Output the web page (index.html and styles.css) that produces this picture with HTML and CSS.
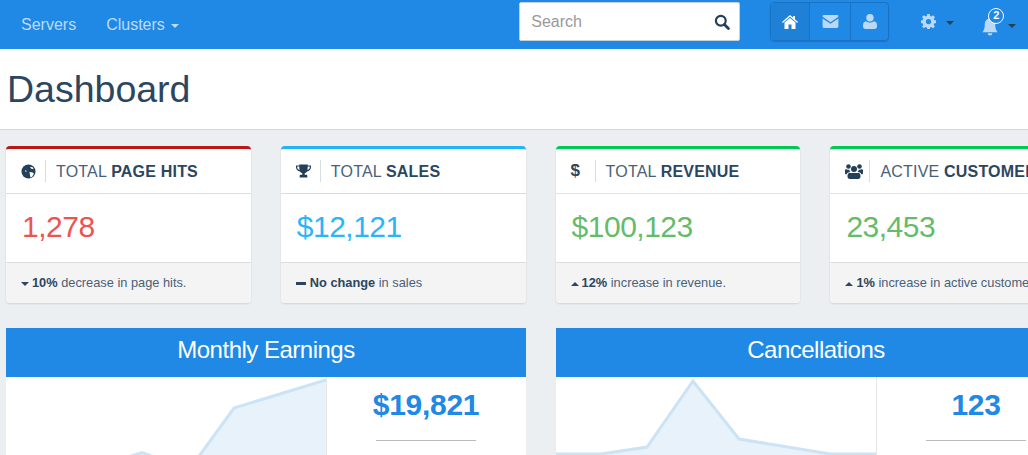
FILE: index.html
```html
<!DOCTYPE html>
<html lang="en">
<head>
<meta charset="utf-8">
<title>Dashboard</title>
<link rel="stylesheet" href="styles.css">
</head>
<body>
<nav class="navbar">
  <a class="nav-link servers" href="#">Servers</a>
  <a class="nav-link clusters" href="#">Clusters <span class="caret light"></span></a>
  <form class="search">
    <input class="search-input" type="text" placeholder="Search">
    <svg class="search-icon" viewBox="0 0 16 16"><circle cx="6.8" cy="6.8" r="4.9" fill="none" stroke="#243f58" stroke-width="2.2"/><path d="M10.4 10.4l4 4" stroke="#243f58" stroke-width="2.8" stroke-linecap="round"/></svg>
  </form>
  <div class="btn-group">
    <a class="btn active" href="#"><svg class="ico-home" viewBox="0 0 16 14"><path fill="#fff" d="M8 0l3 2.6V1h2v3.3L16 7l-.8.9L8 1.8.8 7.9 0 7z"/><path fill="#fff" d="M8 3l5.500 4.600V14H9.500V9.500h-3V14H2.500V7.600z"/></svg></a>
    <a class="btn" href="#"><svg class="ico-mail" viewBox="0 0 17 14"><path fill="#b9d9f6" d="M1.500 0h14A1.500 1.500 0 0 1 17 1.500V2L8.500 7.800 0 2v-.5A1.500 1.500 0 0 1 1.500 0z"/><path fill="#b9d9f6" d="M0 3.700l8.500 5.800L17 3.700v8.800a1.500 1.500 0 0 1-1.500 1.500h-14A1.500 1.500 0 0 1 0 12.500z"/></svg></a>
    <a class="btn" href="#"><svg class="ico-user" viewBox="0 0 14 15"><circle cx="7" cy="3.700" r="3.700" fill="#b9d9f6"/><path fill="#b9d9f6" d="M3 7.200c1 .9 2.500 1.400 4 1.400s3-.5 4-1.400c2 .3 3 1.800 3 4.300v1c0 1.500-1 2.500-2.500 2.500h-9C1 15 0 14 0 12.500v-1c0-2.500 1-4 3-4.300z"/></svg></a>
  </div>
  <a class="tool gear" href="#"><svg class="ico-gear" viewBox="0 0 16 16"><path fill="#b9d9f6" fill-rule="evenodd" d="M6.600 0h2.800l.4 2.200 1.300.5 1.800-1.300 2 2-1.300 1.800.5 1.300 1.900.4v2.800l-2 .4-.5 1.300 1.300 1.800-2 2-1.800-1.300-1.300.5-.4 2.200H6.600l-.4-2.200-1.300-.5-1.800 1.300-2-2 1.300-1.800-.5-1.300L0 9.600V6.800l1.900-.4.500-1.300L1.100 3.300l2-2 1.800 1.300 1.300-.5zM8 5.300a2.800 2.800 0 1 0 0 5.600 2.800 2.800 0 0 0 0-5.600z"/></svg><span class="caret dark"></span></a>
  <a class="tool bell" href="#"><svg class="ico-bell" viewBox="0 0 16 20"><path fill="#b9d9f6" d="M8 0a2 2 0 0 1 2 2c2.500.7 3.500 3 3.500 6 0 4 1 6 2.500 8H0c1.500-2 2.500-4 2.500-8 0-3 1-5.300 3.500-6a2 2 0 0 1 2-2z"/><path fill="#b9d9f6" d="M5.500 17h5a2.500 2.500 0 0 1-5 0z"/></svg><span class="badge">2</span><span class="caret dark"></span></a>
</nav>

<header class="page-header"><h1 class="page-title">Dashboard</h1></header>

<main class="content">
  <section class="stat-row">
    <article class="card card-red">
      <div class="card-head"><span class="card-icon"><svg class="ico-globe" viewBox="0 0 16 16"><circle cx="8" cy="8" r="7.500" fill="#243f58"/><path fill="#fff" d="M9.500 3l3 .5 1 2-2.500-.5zM9 8.500l3.500.5 1.300 1.500-2 3-1.700.8-.6-3zM4 7.500l1.500 1 .5-1-1-.8z"/></svg></span><h2 class="card-title">TOTAL <b>PAGE HITS</b></h2></div>
      <div class="card-value">1,278</div>
      <div class="card-foot"><span class="tri down"></span><b>10%</b> decrease in page hits.</div>
    </article>
    <article class="card card-blue">
      <div class="card-head"><span class="card-icon"><svg class="ico-trophy" viewBox="0 0 16 14"><path fill="#243f58" d="M3.500 0h9v1H16v2c0 2.500-1.800 4-4.200 4.400C11 8.500 10 9.200 9.300 9.500V11h1.500c.8 0 1.300.5 1.300 1.200V14H3.900v-1.800c0-.7.500-1.200 1.300-1.200h1.500V9.500C6 9.200 5 8.500 4.200 7.400 1.800 7 0 5.500 0 3V1h3.500zM1.300 2.300V3c0 1.500.9 2.500 2.600 3-.3-1-.4-2.300-.4-3.700zm13.400 0h-2.200c0 1.400-.1 2.700-.4 3.700 1.700-.5 2.600-1.500 2.600-3z"/></svg></span><h2 class="card-title">TOTAL <b>SALES</b></h2></div>
      <div class="card-value">$12,121</div>
      <div class="card-foot"><span class="dash"></span><b>No change</b> in sales</div>
    </article>
    <article class="card card-green">
      <div class="card-head"><span class="card-icon glyph">$</span><h2 class="card-title">TOTAL <b>REVENUE</b></h2></div>
      <div class="card-value">$100,123</div>
      <div class="card-foot"><span class="tri up"></span><b>12%</b> increase in revenue.</div>
    </article>
    <article class="card card-green">
      <div class="card-head"><span class="card-icon"><svg class="ico-users" viewBox="0 0 18 15"><g fill="#243f58"><circle cx="9" cy="5" r="3"/><circle cx="3.500" cy="2.500" r="2.300"/><circle cx="14.500" cy="2.500" r="2.300"/><path d="M4.500 9h9c1.500 0 2 1.500 2 3.200 0 1.700-.8 2.800-2.300 2.800H4.800c-1.500 0-2.300-1.100-2.300-2.800C2.500 10.500 3 9 4.500 9z"/><path d="M0 6.500C0 5.500.8 5 1.500 5.300c1 .5 2 .6 2.800.4.100 1 .5 1.800 1.100 2.300-1.900 0-3.100.8-3.800 2.300H1c-.7 0-1-.5-1-1.300zM18 6.500c0-1-.8-1.500-1.500-1.200-1 .5-2 .6-2.800.4-.1 1-.5 1.800-1.100 2.300 1.900 0 3.100.8 3.800 2.300h.6c.7 0 1-.5 1-1.300z"/></g></svg></span><h2 class="card-title">ACTIVE <b>CUSTOMERS</b></h2></div>
      <div class="card-value">23,453</div>
      <div class="card-foot"><span class="tri up"></span><b>1%</b> increase in active customers.</div>
    </article>
  </section>

  <section class="panel-row">
    <article class="panel">
      <h2 class="panel-title">Monthly Earnings</h2>
      <div class="panel-body">
        <div class="chart"><svg class="chart-svg" viewBox="0 0 320 100"><path class="area" d="M0 100H91V90L136 75.500L183 93L228 31L320 3V100Z"/><path class="line" d="M91 90L136 75.500L183 93L228 31L320 3"/></svg></div>
        <div class="figures"><div class="figure">$19,821</div><div class="rule"></div></div>
      </div>
    </article>
    <article class="panel">
      <h2 class="panel-title">Cancellations</h2>
      <div class="panel-body">
        <div class="chart"><svg class="chart-svg" viewBox="0 0 320 100"><path class="area" d="M0 100V77L45 77L91 70L137 4L183 62L274 77L320 77V100Z"/><path class="line" d="M0 77L45 77L91 70L137 4L183 62L274 77L320 77"/></svg></div>
        <div class="figures"><div class="figure">123</div><div class="rule"></div></div>
      </div>
    </article>
  </section>
</main>
</body>
</html>
```
FILE: styles.css
```css
* { box-sizing: border-box; }
html, body { margin: 0; height: 455px; overflow: hidden; }
body { background: #ebeff2; font-family: "Liberation Sans", Arial, sans-serif; color: #2c4660; width: 1028px; }
a { text-decoration: none; }

.navbar { height: 49px; background: #2088e5; display: flex; align-items: center; }
.nav-link { color: #bcdcf8; font-size: 16px; line-height: 43px; height: 43px; }
.servers { margin-left: 21px; }
.clusters { margin-left: 30px; }
.caret { display: inline-block; width: 0; height: 0; border-left: 4px solid transparent; border-right: 4px solid transparent; border-top: 4px solid; vertical-align: middle; margin-left: 2px; }
.caret.light { color: #bcdcf8; }
.caret.dark { color: #243f58; }

.search { margin-left: 340px; width: 221px; height: 39px; background: #fff; border: 1px solid #c4d0da; border-radius: 2px; display: flex; align-items: center; margin-top: -6px; }
.search-input { flex: 1; min-width: 0; border: 0; outline: 0; background: none; font: 16px "Liberation Sans", Arial, sans-serif; padding: 0 0 0 11px; }
.search-input::placeholder { color: #999; opacity: 1; }
.search-icon { width: 16px; height: 16px; margin-right: 9px; }

.btn-group { margin-left: 30px; margin-top: -6px; height: 39px; width: 119px; display: flex; border: 1px solid #1b72c2; border-radius: 4px; box-shadow: 0 1px 1px rgba(20, 90, 160, .4); }
.btn { display: flex; align-items: center; justify-content: center; border-right: 1px solid #1b72c2; height: 100%; }
.btn:nth-child(1) { width: 39px; }
.btn:nth-child(2) { width: 41px; }
.btn:nth-child(3) { flex: 1; border-right: 0; }
.btn.active { background: #1f80d8; }
.ico-home { width: 16px; height: 14px; }
.ico-mail { width: 17px; height: 13px; }
.ico-user { width: 14px; height: 15px; }

.tool { display: flex; align-items: center; position: relative; margin-top: -6px; }
.gear { margin-left: 32px; }
.ico-gear { width: 15px; height: 15px; }
.gear .caret { margin-left: 10px; margin-top: 3px; }
.bell { margin-left: 28px; }
.ico-bell { width: 16px; height: 19px; margin-top: 9px; }
.bell .caret { margin-left: 10px; margin-top: 8px; }
.badge { position: absolute; left: 6px; top: 0; width: 16px; height: 16px; border-radius: 50%; background: #2088e5; border: 1.500px solid #fff; color: #fff; font-size: 11px; font-weight: 700; line-height: 13px; text-align: center; }

.page-header { height: 81px; background: #fff; border-bottom: 1px solid #cfdbd9; padding: 0 7px; }
.page-title { margin: 0; font-size: 37.500px; font-weight: 400; line-height: 80px; color: #2c4660; }

.content { padding: 16px 0 0 6px; width: 1200px; }
.stat-row { display: flex; gap: 30px; }
.card { flex: 0 0 244.800px; height: 157px; background: #fff; border-radius: 4px; border-top: 3px solid; box-shadow: 0 1px 2px rgba(0, 0, 0, .12); overflow: hidden; }
.card-red { border-top-color: #b81818; }
.card-blue { border-top-color: #21b4f6; }
.card-green { border-top-color: #00c853; }
.card-red .card-head { border-bottom-color: #ecd6dc; }
.card-blue .card-head { border-bottom-color: #c4e3f2; }
.card-green .card-head { border-bottom-color: #dbe9d6; }
.card-head { height: 45px; display: flex; align-items: center; border-bottom: 1px solid; padding-left: 15px; }
.card-icon { width: 25px; height: 22px; border-right: 1px solid #d8dde1; display: flex; align-items: center; flex: none; margin-right: 10px; }
.glyph { font-size: 17px; font-weight: 700; }
.ico-globe { width: 15px; height: 15px; }
.ico-trophy { width: 15px; height: 14px; }
.ico-users { width: 18px; height: 15px; }
.card-title { margin: 2px 0 0; font-size: 16px; font-weight: 400; line-height: 22px; letter-spacing: .2px; white-space: nowrap; color: #4a6078; }
.card-title b { color: #2c4660; }
.card-value { height: 68px; padding-left: 16px; font-size: 30px; line-height: 66px; letter-spacing: -.5px; }
.card-red .card-value { color: #ef5350; }
.card-blue .card-value { color: #29b6f6; }
.card-green .card-value { color: #66bb6a; }
.card-foot { height: 41px; background: #f4f4f4; border-top: 1px solid #ddd; padding-left: 15px; font-size: 12.800px; line-height: 39px; color: #4a6078; white-space: nowrap; }
.card-foot b { color: #2c4660; }
.tri { display: inline-block; width: 0; height: 0; border-left: 4px solid transparent; border-right: 4px solid transparent; vertical-align: middle; margin-right: 3px; }
.tri.down { border-top: 4px solid #2c4660; }
.tri.up { border-bottom: 4px solid #2c4660; }
.dash { display: inline-block; width: 10px; height: 3px; background: #2c4660; vertical-align: middle; margin-right: 4px; }

.panel-row { display: flex; gap: 30px; margin-top: 25px; }
.panel { flex: 0 0 520px; background: #fff; }
.panel-title { margin: 0; height: 49px; background: #2088e5; color: #fff; font-size: 24px; font-weight: 400; line-height: 44px; letter-spacing: -.5px; text-align: center; }
.panel-body { display: flex; height: 100px; }
.chart { flex: 0 0 321px; border-right: 1px solid #e4e6e8; }
.chart-svg { display: block; width: 320px; height: 100px; }
.area { fill: #e7f2fa; }
.line { fill: none; stroke: #cbe3f5; stroke-width: 3; }
.figures { flex: 1; display: flex; flex-direction: column; align-items: center; padding-right: 1px; }
.figure { font-size: 30px; font-weight: 700; line-height: 34px; margin-top: 11px; letter-spacing: -.3px; color: #2088e5; }
.rule { width: 100px; height: 1px; background: #bbb; margin-top: 18px; }
```
